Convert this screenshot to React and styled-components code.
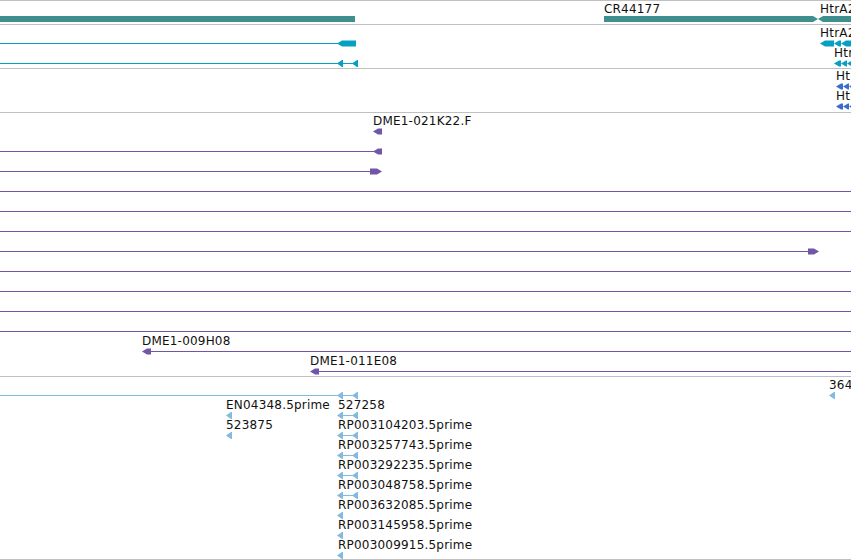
import React from "react";
import styled, { createGlobalStyle } from "styled-components";

const GlobalStyle = createGlobalStyle`
  html, body {
    margin: 0;
    padding: 0;
    background: #fff;
    overflow: hidden;
  }
  body {
    font-family: "DejaVu Sans", "Liberation Sans", sans-serif;
  }
`;

const GRID = "#c0c0c0";

const colors = {
  teal: "#408f8f",
  cyan: "#07a0c2",
  blue: "#3a6dcf",
  purple: "#7155a8",
  sky: "#84b9e0",
};

const Browser = styled.div`
  width: 851px;
  overflow: hidden;
  border-top: 1px solid ${GRID};
`;

const Track = styled.div`
  position: relative;
  height: ${(p) => p.$height}px;
  border-bottom: 1px solid ${GRID};
  overflow: hidden;
`;

const Canvas = styled.svg`
  display: block;
  width: 851px;
  height: ${(p) => p.$height}px;
`;

const Label = styled.span`
  position: absolute;
  font-size: 12px;
  line-height: 14px;
  letter-spacing: 0.2px;
  color: #111;
  white-space: nowrap;
`;

// feature glyphs, coordinates are track-local pixels
function Glyph({ g, color }) {
  const { t, cy } = g;
  if (t === "line") {
    return <rect x={g.x1} y={cy} width={g.x2 - g.x1} height={1} fill={color} />;
  }
  if (t === "bar") {
    return <rect x={g.x1} y={cy - 3} width={g.x2 - g.x1} height={6} fill={color} />;
  }
  if (t === "left") {
    const { x1, x2 } = g;
    const pts = `${x1},${cy + 0.5} ${x1 + 5},${cy - 2.5} ${x2},${cy - 2.5} ${x2},${cy + 3.5} ${x1 + 5},${cy + 3.5}`;
    return <polygon points={pts} fill={color} />;
  }
  if (t === "right") {
    const { x1, x2 } = g;
    const pts = `${x1},${cy - 2.5} ${x2 - 5},${cy - 2.5} ${x2},${cy + 0.5} ${x2 - 5},${cy + 3.5} ${x1},${cy + 3.5}`;
    return <polygon points={pts} fill={color} />;
  }
  if (t === "tick") {
    const { x } = g;
    const pts = `${x},${cy + 0.5} ${x + 5},${cy - 3} ${x + 6},${cy - 3} ${x + 6},${cy + 4} ${x + 5},${cy + 4}`;
    return <polygon points={pts} fill={color} />;
  }
  if (t === "bowtie") {
    const { x1, x2, mid } = g;
    const pts = `${x1},${cy - 3} ${mid - 5},${cy - 3} ${mid},${cy} ${mid + 5},${cy - 3} ${x2},${cy - 3} ${x2},${cy + 3} ${mid + 5},${cy + 3} ${mid},${cy} ${mid - 5},${cy + 3} ${x1},${cy + 3}`;
    return <polygon points={pts} fill={color} />;
  }
  return null;
}

const line = (x1, x2, cy) => ({ t: "line", x1, x2, cy });
const left = (x1, x2, cy) => ({ t: "left", x1, x2, cy });
const right = (x1, x2, cy) => ({ t: "right", x1, x2, cy });
const tick = (x, cy) => ({ t: "tick", x, cy });
const pair = (cy) => [line(340, 356, cy), tick(337, cy), tick(352, cy)];
const chain = (x, cy) => [left(x, x + 7, cy), left(x + 7, x + 13, cy), left(x + 13, x + 20, cy)];

const purpleRows = [18, 38, 58, 78, 98, 118, 138, 158, 178, 198, 218, 238, 258];

const tracks = [
  {
    height: 23,
    color: colors.teal,
    glyphs: [
      { t: "bar", x1: 0, x2: 355, cy: 18 },
      { t: "bowtie", x1: 604, x2: 851, mid: 818, cy: 18 },
    ],
    labels: [
      { x: 604, cy: 18, text: "CR44177" },
      { x: 820, cy: 18, text: "HtrA2" },
    ],
  },
  {
    height: 43,
    color: colors.cyan,
    glyphs: [
      line(0, 340, 18),
      left(337, 356, 18),
      line(0, 356, 38),
      tick(337, 38),
      tick(352, 38),
      left(820, 834, 18),
      left(834, 841, 18),
      left(841, 851, 18),
      ...chain(834, 38),
    ],
    labels: [
      { x: 820, cy: 18, text: "HtrA2" },
      { x: 834, cy: 38, text: "HtrA2" },
    ],
  },
  {
    height: 43,
    color: colors.blue,
    glyphs: [...chain(836, 17), ...chain(836, 37)],
    labels: [
      { x: 836, cy: 17, text: "HtrA2" },
      { x: 836, cy: 37, text: "HtrA2" },
    ],
  },
  {
    height: 263,
    color: colors.purple,
    glyphs: [
      left(373, 382, 18),
      line(0, 376, 38),
      left(373, 382, 38),
      line(0, 374, 58),
      right(370, 382, 58),
      ...purpleRows.slice(3, 6).map((cy) => line(0, 851, cy)),
      line(0, 810, 138),
      right(808, 819, 138),
      ...purpleRows.slice(7, 11).map((cy) => line(0, 851, cy)),
      line(146, 851, 238),
      left(142, 151, 238),
      line(314, 851, 258),
      left(310, 319, 258),
    ],
    labels: [
      { x: 373, cy: 18, text: "DME1-021K22.F" },
      { x: 142, cy: 238, text: "DME1-009H08" },
      { x: 310, cy: 258, text: "DME1-011E08" },
    ],
  },
  {
    height: 182,
    color: colors.sky,
    glyphs: [
      line(0, 356, 18),
      tick(337, 18),
      tick(352, 18),
      tick(829, 18),
      tick(226, 38),
      tick(226, 58),
      ...pair(38),
      ...pair(58),
      ...pair(78),
      ...pair(98),
      ...pair(118),
      tick(337, 138),
      tick(337, 158),
      tick(337, 178),
    ],
    labels: [
      { x: 829, cy: 18, text: "364826" },
      { x: 226, cy: 38, text: "EN04348.5prime" },
      { x: 338, cy: 38, text: "527258" },
      { x: 226, cy: 58, text: "523875" },
      { x: 338, cy: 58, text: "RP003104203.5prime" },
      { x: 338, cy: 78, text: "RP003257743.5prime" },
      { x: 338, cy: 98, text: "RP003292235.5prime" },
      { x: 338, cy: 118, text: "RP003048758.5prime" },
      { x: 338, cy: 138, text: "RP003632085.5prime" },
      { x: 338, cy: 158, text: "RP003145958.5prime" },
      { x: 338, cy: 178, text: "RP003009915.5prime" },
    ],
  },
];

function TrackView({ track }) {
  return (
    <Track $height={track.height}>
      <Canvas $height={track.height} viewBox={`0 0 851 ${track.height}`}>
        {track.glyphs.map((g, i) => (
          <Glyph key={i} g={g} color={track.color} />
        ))}
      </Canvas>
      {track.labels.map((l) => (
        <Label key={l.text + l.x + l.cy} style={{ left: l.x, top: l.cy - 17 }}>
          {l.text}
        </Label>
      ))}
    </Track>
  );
}

export default function App() {
  return (
    <>
      <GlobalStyle />
      <Browser>
        {tracks.map((t, i) => (
          <TrackView key={i} track={t} />
        ))}
      </Browser>
    </>
  );
}
